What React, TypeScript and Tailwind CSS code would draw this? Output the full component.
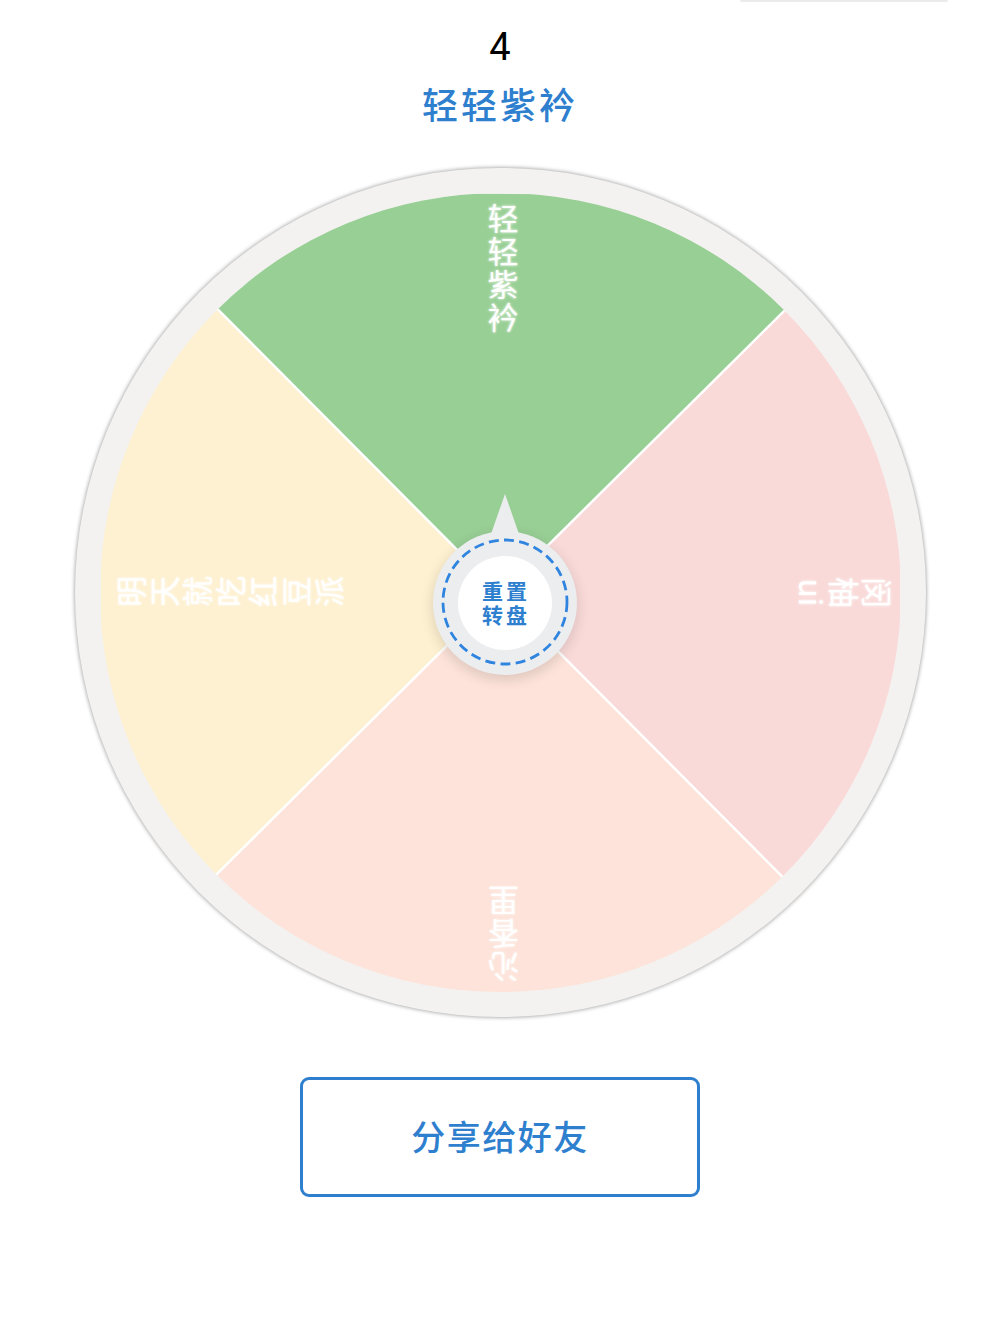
export default function App() {
  const labels = [
    { text: "轻轻紫衿", cls: "rotate-0 pl-[6px] pt-[32px]" },
    { text: "闵柚ui", cls: "rotate-90 pl-[0px] pt-[30px]" },
    { text: "沁香里", cls: "rotate-180 pr-[6px] pt-[32px]" },
    { text: "明天就吃红豆派", cls: "-rotate-90 pl-[2px] pt-[37px]" },
  ];
  return (
    <div className="w-[1000px] h-[1333px] bg-white overflow-hidden flex flex-col items-center font-['Noto_Sans_CJK_SC','Noto_Sans',sans-serif]">
      <div className="w-full h-[2px] flex justify-end pr-[52px]">
        <div className="w-[208px] h-[2px] bg-[#ebebeb] rounded-b-full" />
      </div>
      <div className="mt-[23px] h-[44px] flex items-center justify-center text-[38px] leading-[44px] text-black font-['Roboto',sans-serif]">4</div>
      <div className="mt-[11px] h-[46px] flex items-center justify-center text-[36px] leading-[46px] tracking-[3px] font-medium text-[#2f7fcf]">轻轻紫衿</div>

      <div className="relative mt-[42px] w-[851px] h-[849px] shrink-0 rounded-full bg-[#f3f2f0] p-[25px] shadow-[0_0_4px_rgba(0,0,0,0.45)]">
        <svg viewBox="0 0 800 800" className="block w-[801px] h-[799px] rounded-full overflow-hidden">
          <polygon points="400,400 0,-1 800,3" fill="#98cf95" />
          <polygon points="400,400 800,3 800,803" fill="#f9dad9" />
          <polygon points="400,400 800,803 0,797" fill="#fde3d9" />
          <polygon points="400,400 0,797 0,-1" fill="#fef1d1" />
          <path d="M0 -1L800 803M800 3L0 797" stroke="#ffffff" strokeWidth="2.5" />
        </svg>

        {labels.map((l) => (
          <div key={l.text} className={`absolute inset-0 flex justify-center items-start ${l.cls}`}>
            <div className="w-[32px] text-center text-[31px] leading-[33px] text-white [text-shadow:0_0_3px_#ffffff]">{l.text}</div>
          </div>
        ))}

        {/* hub */}
        <div className="absolute left-[358px] top-[363px] w-[144px] h-[144px] rounded-full bg-[#ecedee] shadow-[0_4px_14px_rgba(0,0,0,0.14)] flex items-center justify-center">
          <svg viewBox="0 0 30 40" className="absolute left-[57px] top-[-37px] w-[30px] h-[40px]">
            <path d="M15 0L29 40H1Z" fill="#ecedee" />
          </svg>
          <svg viewBox="0 0 130 130" className="absolute left-[7px] top-[7px] w-[130px] h-[130px]">
            <circle cx="65" cy="64" r="62" fill="none" stroke="#2f84e0" strokeWidth="2.8" strokeDasharray="10 5.3" />
          </svg>
          <div className="relative w-[94px] h-[94px] rounded-full bg-white flex flex-col items-center justify-center pb-[3px] text-[21px] leading-[24px] font-bold tracking-[3px] text-[#2f7fcf]">
            <span className="pl-[3px]">重置</span>
            <span className="pl-[3px]">转盘</span>
          </div>
        </div>
      </div>

      <button className="mt-[60px] w-[400px] h-[120px] shrink-0 rounded-[9px] border-[3px] border-[#2f7fcf] bg-white flex items-center justify-center pb-[4px] text-[34px] tracking-[1.5px] font-medium text-[#2f7fcf]">
        分享给好友
      </button>
    </div>
  );
}
